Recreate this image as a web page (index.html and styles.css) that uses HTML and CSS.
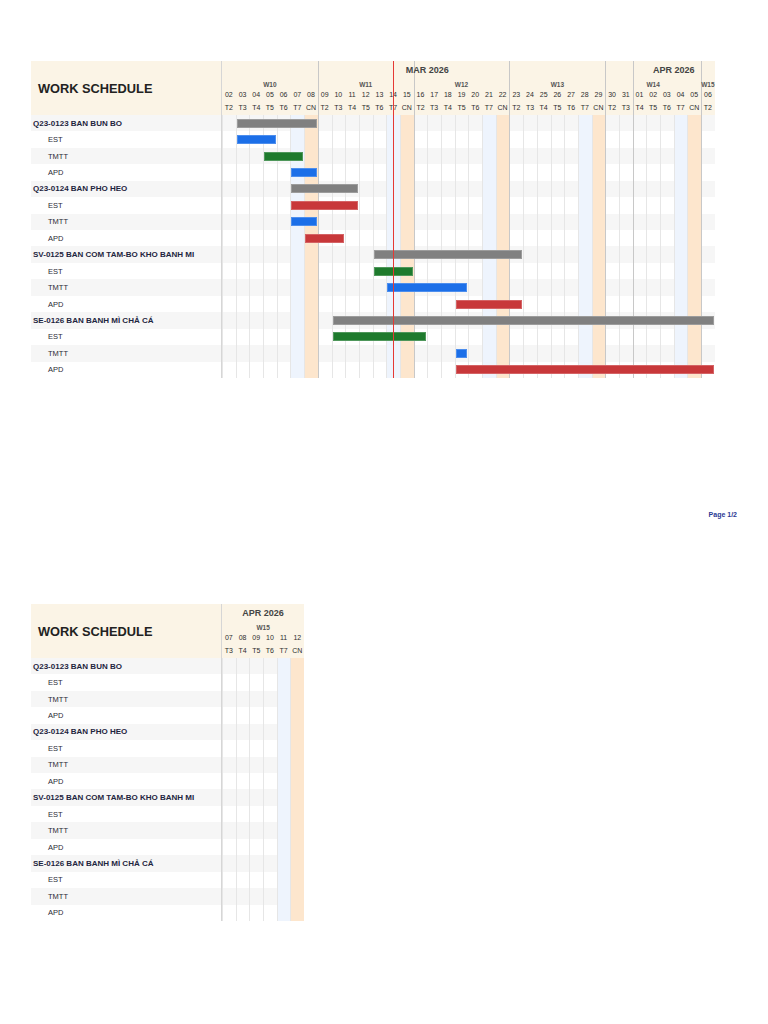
FILE: index.html
```html
<!DOCTYPE html>
<html lang="vi">
<head>
<meta charset="utf-8">
<title>Work Schedule</title>
<link rel="stylesheet" href="styles.css">
</head>
<body>
<section class="page">
  <div class="sheet">
    <div class="cols">
      <div class="lab"></div>
      <div class="day"></div><div class="day"></div><div class="day"></div><div class="day"></div><div class="day"></div><div class="day sat"></div><div class="day sun"></div>
      <div class="day wk"></div><div class="day"></div><div class="day"></div><div class="day"></div><div class="day"></div><div class="day sat"></div><div class="day sun"></div>
      <div class="day wk"></div><div class="day"></div><div class="day"></div><div class="day"></div><div class="day"></div><div class="day sat"></div><div class="day sun"></div>
      <div class="day wk"></div><div class="day"></div><div class="day"></div><div class="day"></div><div class="day"></div><div class="day sat"></div><div class="day sun"></div>
      <div class="day wk"></div><div class="day"></div><div class="day wk"></div><div class="day"></div><div class="day"></div><div class="day sat"></div><div class="day sun"></div>
      <div class="day wk"></div>
    </div>
    <div class="rows">
      <div class="head">
        <div class="title">WORK SCHEDULE</div>
        <div class="dates dates-main">
          <div class="month span30">MAR 2026</div>
          <div class="month span6">APR 2026</div>
          <div class="week span7">W10</div>
          <div class="week span7">W11</div>
          <div class="week span7">W12</div>
          <div class="week span7">W13</div>
          <div class="week span7">W14</div>
          <div class="week span1">W15</div>
          <div class="dnum">02</div><div class="dnum">03</div><div class="dnum">04</div><div class="dnum">05</div><div class="dnum">06</div><div class="dnum">07</div><div class="dnum">08</div>
          <div class="dnum">09</div><div class="dnum">10</div><div class="dnum">11</div><div class="dnum">12</div><div class="dnum">13</div><div class="dnum">14</div><div class="dnum">15</div>
          <div class="dnum">16</div><div class="dnum">17</div><div class="dnum">18</div><div class="dnum">19</div><div class="dnum">20</div><div class="dnum">21</div><div class="dnum">22</div>
          <div class="dnum">23</div><div class="dnum">24</div><div class="dnum">25</div><div class="dnum">26</div><div class="dnum">27</div><div class="dnum">28</div><div class="dnum">29</div>
          <div class="dnum">30</div><div class="dnum">31</div><div class="dnum">01</div><div class="dnum">02</div><div class="dnum">03</div><div class="dnum">04</div><div class="dnum">05</div>
          <div class="dnum">06</div>
          <div class="wday">T2</div><div class="wday">T3</div><div class="wday">T4</div><div class="wday">T5</div><div class="wday">T6</div><div class="wday">T7</div><div class="wday">CN</div>
          <div class="wday">T2</div><div class="wday">T3</div><div class="wday">T4</div><div class="wday">T5</div><div class="wday">T6</div><div class="wday">T7</div><div class="wday">CN</div>
          <div class="wday">T2</div><div class="wday">T3</div><div class="wday">T4</div><div class="wday">T5</div><div class="wday">T6</div><div class="wday">T7</div><div class="wday">CN</div>
          <div class="wday">T2</div><div class="wday">T3</div><div class="wday">T4</div><div class="wday">T5</div><div class="wday">T6</div><div class="wday">T7</div><div class="wday">CN</div>
          <div class="wday">T2</div><div class="wday">T3</div><div class="wday">T4</div><div class="wday">T5</div><div class="wday">T6</div><div class="wday">T7</div><div class="wday">CN</div>
          <div class="wday">T2</div>
        </div>
      </div>
      <div class="row group"><div class="label">Q23-0123 BAN BUN BO</div><div class="track track-main"><div class="bar gray" style="grid-column: 2 / span 6"></div></div></div>
      <div class="row"><div class="label">EST</div><div class="track track-main"><div class="bar blue" style="grid-column: 2 / span 3"></div></div></div>
      <div class="row"><div class="label">TMTT</div><div class="track track-main"><div class="bar green" style="grid-column: 4 / span 3"></div></div></div>
      <div class="row"><div class="label">APD</div><div class="track track-main"><div class="bar blue" style="grid-column: 6 / span 2"></div></div></div>
      <div class="row group"><div class="label">Q23-0124 BAN PHO HEO</div><div class="track track-main"><div class="bar gray" style="grid-column: 6 / span 5"></div></div></div>
      <div class="row"><div class="label">EST</div><div class="track track-main"><div class="bar red" style="grid-column: 6 / span 5"></div></div></div>
      <div class="row"><div class="label">TMTT</div><div class="track track-main"><div class="bar blue" style="grid-column: 6 / span 2"></div></div></div>
      <div class="row"><div class="label">APD</div><div class="track track-main"><div class="bar red" style="grid-column: 7 / span 3"></div></div></div>
      <div class="row group"><div class="label">SV-0125 BAN COM TAM-BO KHO BANH MI</div><div class="track track-main"><div class="bar gray" style="grid-column: 12 / span 11"></div></div></div>
      <div class="row"><div class="label">EST</div><div class="track track-main"><div class="bar green" style="grid-column: 12 / span 3"></div></div></div>
      <div class="row"><div class="label">TMTT</div><div class="track track-main"><div class="bar blue" style="grid-column: 13 / span 6"></div></div></div>
      <div class="row"><div class="label">APD</div><div class="track track-main"><div class="bar red" style="grid-column: 18 / span 5"></div></div></div>
      <div class="row group"><div class="label">SE-0126 BAN BANH MÌ CHẢ CÁ</div><div class="track track-main"><div class="bar gray" style="grid-column: 9 / span 28"></div></div></div>
      <div class="row"><div class="label">EST</div><div class="track track-main"><div class="bar green" style="grid-column: 9 / span 7"></div></div></div>
      <div class="row"><div class="label">TMTT</div><div class="track track-main"><div class="bar blue" style="grid-column: 18 / span 1"></div></div></div>
      <div class="row"><div class="label">APD</div><div class="track track-main"><div class="bar red" style="grid-column: 18 / span 19"></div></div></div>
    </div>
    <div class="today"></div>
  </div>
  <footer class="footer">Page 1/2</footer>
</section>

<section class="page page-last">
  <div class="sheet">
    <div class="cols">
      <div class="lab"></div>
      <div class="day"></div><div class="day"></div><div class="day"></div><div class="day"></div><div class="day sat"></div><div class="day sun"></div>
    </div>
    <div class="rows">
      <div class="head">
        <div class="title">WORK SCHEDULE</div>
        <div class="dates dates-tail">
          <div class="month span6">APR 2026</div>
          <div class="week span6">W15</div>
          <div class="dnum">07</div><div class="dnum">08</div><div class="dnum">09</div><div class="dnum">10</div><div class="dnum">11</div><div class="dnum">12</div>
          <div class="wday">T3</div><div class="wday">T4</div><div class="wday">T5</div><div class="wday">T6</div><div class="wday">T7</div><div class="wday">CN</div>
        </div>
      </div>
      <div class="row group"><div class="label">Q23-0123 BAN BUN BO</div></div>
      <div class="row"><div class="label">EST</div></div>
      <div class="row"><div class="label">TMTT</div></div>
      <div class="row"><div class="label">APD</div></div>
      <div class="row group"><div class="label">Q23-0124 BAN PHO HEO</div></div>
      <div class="row"><div class="label">EST</div></div>
      <div class="row"><div class="label">TMTT</div></div>
      <div class="row"><div class="label">APD</div></div>
      <div class="row group"><div class="label">SV-0125 BAN COM TAM-BO KHO BANH MI</div></div>
      <div class="row"><div class="label">EST</div></div>
      <div class="row"><div class="label">TMTT</div></div>
      <div class="row"><div class="label">APD</div></div>
      <div class="row group"><div class="label">SE-0126 BAN BANH MÌ CHẢ CÁ</div></div>
      <div class="row"><div class="label">EST</div></div>
      <div class="row"><div class="label">TMTT</div></div>
      <div class="row"><div class="label">APD</div></div>
    </div>
  </div>
</section>
</body>
</html>
```

FILE: styles.css
```css
* { box-sizing: border-box; }

html, body { margin: 0; background: #fff; }

body {
  font-family: "Liberation Sans", Arial, Helvetica, sans-serif;
  color: #222;
}

.page {
  height: 543px;
  padding: 61px 31px 0;
  display: flex;
  flex-direction: column;
  align-items: flex-start;
}

.page-last { height: 481px; }

.footer {
  margin-top: auto;
  align-self: stretch;
  text-align: right;
  font-size: 7px;
  line-height: 8px;
  font-weight: bold;
  color: #2b3a94;
  padding-bottom: 24px;
}

.sheet {
  position: relative;
  display: grid;
}

.sheet > .cols,
.sheet > .rows { grid-area: 1 / 1; }

/* background layer: header tint, row stripes, day columns */
.cols {
  display: flex;
  background:
    linear-gradient(#fbf4e6, #fbf4e6) 0 0 / 100% 54px no-repeat,
    repeating-linear-gradient(to bottom, #f6f6f6 0 16.4375px, #ffffff 16.4375px 32.875px) 0 54px / 100% 100% no-repeat;
}

.lab {
  width: 191px;
  flex: none;
  border-right: 1px solid #d6d6d6;
}

.day {
  width: 13.7px;
  flex: none;
  background: linear-gradient(#e6e6e6, #e6e6e6) 0 54px / 1px 100% no-repeat;
}

.day.sat {
  background:
    linear-gradient(#e6e6e6, #e6e6e6) 0 54px / 1px 100% no-repeat,
    linear-gradient(#eef4fd, #eef4fd) 0 54px / 100% 100% no-repeat;
}

.day.sun {
  background:
    linear-gradient(#e6e6e6, #e6e6e6) 0 54px / 1px 100% no-repeat,
    linear-gradient(#fde6cd, #fde6cd) 0 54px / 100% 100% no-repeat;
}

.day.wk {
  background: none;
  border-left: 1px solid #c8c8c8;
}

/* content layer */
.rows {
  display: flex;
  flex-direction: column;
}

.head {
  display: flex;
  height: 54px;
}

.title {
  width: 191px;
  flex: none;
  display: flex;
  align-items: center;
  padding-left: 7px;
  font-size: 12.8px;
  font-weight: bold;
  color: #222;
}

.dates {
  display: grid;
  grid-template-rows: 19px 9px 12px 14px;
  text-align: center;
  white-space: nowrap;
}

.dates-main { grid-template-columns: repeat(36, 13.7px); }
.dates-tail { grid-template-columns: repeat(6, 13.7px); }

.span30 { grid-column: span 30; }
.span7 { grid-column: span 7; }
.span6 { grid-column: span 6; }
.span1 { grid-column: span 1; }

.month {
  font-size: 9px;
  line-height: 19px;
  font-weight: bold;
  color: #444;
}

.week {
  font-size: 6.5px;
  line-height: 9px;
  font-weight: bold;
  color: #555;
}

.dnum {
  font-size: 7px;
  line-height: 12px;
  color: #2e2e2e;
}

.wday {
  font-size: 7px;
  line-height: 14px;
  color: #2e2e2e;
}

.row {
  display: flex;
  height: 16.4375px;
}

.label {
  width: 191px;
  flex: none;
  display: flex;
  align-items: center;
  padding-left: 17px;
  font-size: 7.5px;
  color: #2a2a35;
  white-space: nowrap;
}

.group .label {
  padding-left: 2px;
  font-size: 8px;
  font-weight: bold;
  color: #1e2540;
}

.track {
  display: grid;
  align-items: center;
}

.track-main { grid-template-columns: repeat(36, 13.7px); }

.bar {
  height: 9px;
  margin: 0 1px;
  box-shadow: inset 0 0 0 1px rgba(255, 255, 255, 0.22);
}

.bar.gray { background: #808080; }
.bar.blue { background: #1c6fe8; }
.bar.green { background: #1e7a2d; }
.bar.red { background: #c8383a; }

.today {
  position: absolute;
  top: 0;
  bottom: 0;
  left: 362px;
  width: 1px;
  background: #e53935;
}
```
